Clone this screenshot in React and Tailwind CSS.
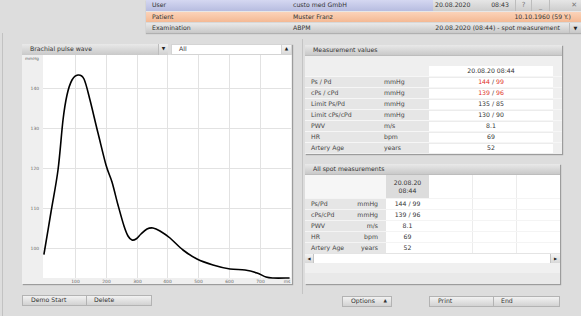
import React from "react"

const FONT = "font-['DejaVu_Sans',sans-serif]"

// pulse wave, absolute page coords, shifted into chart coords below
const WAVE = [
    [44, 254], [51, 212], [58, 170], [63, 120], [67, 95], [72, 80], [78, 75], [84, 79],
    [90, 100], [98, 133], [106, 165], [112, 182], [118, 205], [124, 226], [128, 236],
    [132, 240], [136, 239], [141, 234], [147, 229], [153, 228], [160, 231], [170, 238],
    [183, 250], [197, 259], [213, 265], [230, 269], [245, 270], [257, 273], [266, 277],
    [273, 278], [289, 278],
].map(([x, y]) => [x - 22, y - 55])

function smoothPath(pts) {
    let d = `M${pts[0][0]},${pts[0][1]}`
    for (let i = 0; i < pts.length - 1; i++) {
        const p0 = pts[i - 1] || pts[i]
        const p1 = pts[i]
        const p2 = pts[i + 1]
        const p3 = pts[i + 2] || p2
        const c1 = [p1[0] + (p2[0] - p0[0]) / 6, p1[1] + (p2[1] - p0[1]) / 6]
        const c2 = [p2[0] - (p3[0] - p1[0]) / 6, p2[1] - (p3[1] - p1[1]) / 6]
        d += ` C${c1[0].toFixed(1)},${c1[1].toFixed(1)} ${c2[0].toFixed(1)},${c2[1].toFixed(1)} ${p2[0]},${p2[1]}`
    }
    return d
}

function PulseChart() {
    const vx = [53, 84, 115, 145, 176, 207, 238]
    const hy = [33, 73, 113, 153, 193]
    return (
        <svg width="270" height="229" className="block">
            <rect x="0" y="0" width="270" height="229" fill="#efefef" />
            <rect x="21" y="0" width="248" height="223" fill="#ffffff" />
            {vx.map(x => <line key={x} x1={x + 0.5} y1="0" x2={x + 0.5} y2="223" stroke="#e2e2e2" strokeWidth="1" />)}
            {hy.map(y => <line key={y} x1="21" y1={y + 0.5} x2="269" y2={y + 0.5} stroke="#e2e2e2" strokeWidth="1" />)}
            <text x="3" y="5" fontSize="4.2" fill="#666">mmHg</text>
            {["140", "130", "120", "110", "100"].map((t, i) => (
                <text key={t} x="17" y={hy[i] + 1.5} fontSize="4.4" fill="#666" textAnchor="end">{t}</text>
            ))}
            {["100", "200", "300", "400", "500", "600", "700"].map((t, i) => (
                <text key={t} x={vx[i] + 0.5} y="228" fontSize="4.4" fill="#666" textAnchor="middle">{t}</text>
            ))}
            <text x="265" y="228" fontSize="4.4" fill="#666" textAnchor="middle">ms</text>
            <path d={smoothPath(WAVE)} fill="none" stroke="#000" strokeWidth="1.6" strokeLinejoin="round" strokeLinecap="round" />
        </svg>
    )
}

function Btn({ children, className = "" }) {
    return (
        <div className={`h-[11px] flex items-center bg-gradient-to-b from-[#f2f2f2] to-[#d2d2d2] border border-[#b3b3b3] text-[#333] ${className}`}>
            {children}
        </div>
    )
}

function PanelHeader({ title }) {
    return (
        <div className="h-[11px] flex items-center pl-[8px] bg-gradient-to-b from-[#e9e9e9] to-[#c9c9c9] border-b border-[#bdbdbd] text-[#333]">
            {title}
        </div>
    )
}

const MEAS = [
    ["Ps / Pd", "mmHg", "144", "99", true],
    ["cPs / cPd", "mmHg", "139", "96", true],
    ["Limit Ps/Pd", "mmHg", "135", "85"],
    ["Limit cPs/cPd", "mmHg", "130", "90"],
    ["PWV", "m/s", "8.1"],
    ["HR", "bpm", "69"],
    ["Artery Age", "years", "52"],
]

const SPOT = [
    ["Ps/Pd", "mmHg", "144 / 99"],
    ["cPs/cPd", "mmHg", "139 / 96"],
    ["PWV", "m/s", "8.1"],
    ["HR", "bpm", "69"],
    ["Artery Age", "years", "52"],
]

function MeasurementValues() {
    return (
        <div className="w-[257px] bg-[#efefef] shadow-[1px_1px_1px_#9c9c9c]">
            <PanelHeader title="Measurement values" />
            <div className="h-[10px]" />
            <div className="flex h-[10px]">
                <div className="w-[124px]" />
                <div className="w-[124px] bg-white flex items-center justify-center text-[#333]">20.08.20 08:44</div>
            </div>
            {MEAS.map(([label, unit, a, b, red]) => (
                <div key={label} className="flex h-[11px] border-t border-[#f6f6f6]">
                    <div className="w-[79px] pl-[6px] bg-[#e6e6e6] flex items-center text-[#444]">{label}</div>
                    <div className="w-[45px] bg-[#e6e6e6] flex items-center text-[#444]">{unit}</div>
                    <div className="w-[124px] bg-white border-t border-[#ececec] flex items-center justify-center">
                        {b ? (
                            <span className="text-[#333]">
                                <span className={red ? "text-[#e0312b]" : ""}>{a}</span>
                                {" / "}
                                <span className={red ? "text-[#e0312b]" : ""}>{b}</span>
                            </span>
                        ) : (
                            <span className="text-[#333]">{a}</span>
                        )}
                    </div>
                </div>
            ))}
            <div className="h-[1px]" />
        </div>
    )
}

function SpotMeasurements() {
    return (
        <div className="w-[255px] bg-[#ededed] shadow-[1px_1px_1px_#9c9c9c]">
            <PanelHeader title="All spot measurements" />
            <div className="flex h-[23px]">
                <div className="w-[81px] bg-[#f6f6f6]" />
                <div className="w-[43px] bg-[#dcdcdc] flex flex-col items-center justify-center leading-[8px] text-[#333]">
                    <span>20.08.20</span>
                    <span>08:44</span>
                </div>
                <div className="flex-1 bg-white border-r border-[#ececec]" />
                <div className="w-[44px] bg-white border-r border-[#ececec]" />
                <div className="w-[43px] bg-white" />
            </div>
            {SPOT.map(([label, unit, v]) => (
                <div key={label} className="flex h-[11px] border-t border-[#f4f4f4]">
                    <div className="w-[81px] bg-[#e6e6e6] flex items-center justify-between pl-[6px] pr-[8px] text-[#444]">
                        <span>{label}</span>
                        <span>{unit}</span>
                    </div>
                    <div className="w-[43px] bg-white flex items-center justify-center text-[#333]">{v}</div>
                    <div className="flex-1 bg-white border-r border-[#ececec]" />
                    <div className="w-[44px] bg-white border-r border-[#ececec]" />
                    <div className="w-[43px] bg-white" />
                </div>
            ))}
            <div className="flex h-[10px] bg-white border-t border-[#e4e4e4]">
                <div className="w-[9px] bg-gradient-to-b from-[#f4f4f4] to-[#d8d8d8] border-r border-[#c4c4c4] flex items-center justify-center text-[4px] text-[#222]">◀</div>
                <div className="flex-1" />
                <div className="w-[10px] bg-gradient-to-b from-[#f4f4f4] to-[#d8d8d8] border-l border-[#c4c4c4] flex items-center justify-center text-[4px] text-[#222]">▶</div>
            </div>
            <div className="h-[10px] bg-[#f0f0f0]" />
            <div className="h-[11px] bg-[#e9e9e9]" />
        </div>
    )
}

export default function App() {
    return (
        <div className={`w-[581px] h-[316px] bg-[#dddddd] overflow-hidden text-[6.2px] leading-none ${FONT}`}>
            {/* TOP INFO BAR */}
            <div className="ml-[146px] flex flex-col text-[#333] shadow-[0_1px_1px_#b0b0b0]">
                <div className="h-[11px] flex">
                    <div className="w-[144px] pl-[6px] flex items-center bg-gradient-to-b from-[#d5d8f1] to-[#b7bce0]">User</div>
                    <div className="w-[143px] pl-[3px] flex items-center bg-gradient-to-b from-[#d5d8f1] to-[#b7bce0]">custo med GmbH</div>
                    <div className="flex-1 flex items-center bg-gradient-to-b from-[#e6e6e6] to-[#cdcdcd]">
                        <span className="ml-[2px] w-[48px]">20.08.2020</span>
                        <span className="w-[32px] text-right pr-[6px]">08:43</span>
                        <span className="w-[16px] h-full border-l border-[#bdbdbd] flex items-center justify-center text-[#777] text-[7px]">?</span>
                        <span className="w-[18px] h-full border-l border-[#bdbdbd] flex items-end justify-center pb-[2px] text-[#777]">_</span>
                        <span className="flex-1 h-full border-l border-[#bdbdbd] flex items-center justify-end pr-[4px] text-[#777] text-[7px]">✕</span>
                    </div>
                </div>
                <div className="h-[11px] flex items-center bg-gradient-to-b from-[#fbd3b9] to-[#f4b994] border-t border-[#e7e7e7]">
                    <span className="w-[144px] pl-[6px]">Patient</span>
                    <span className="pl-[3px]">Muster Franz</span>
                    <span className="ml-auto pr-[10px]">10.10.1960 (59 Y.)</span>
                </div>
                <div className="h-[11px] flex items-center bg-gradient-to-b from-[#e9e9e9] to-[#c8c8c8] border-t border-[#d8d8d8]">
                    <span className="w-[144px] pl-[6px]">Examination</span>
                    <span className="pl-[3px]">ABPM</span>
                    <span className="ml-auto pr-[9px]">20.08.2020 (08:44) - spot measurement</span>
                    <span className="w-[12px] h-full border-l border-[#bdbdbd] flex items-center justify-center text-[5px] text-[#222]">▼</span>
                </div>
            </div>

            {/* MAIN */}
            <div className="flex pt-[11px] ml-[2px] border-l border-[#c2c2c2] h-[283px]">
                {/* LEFT: PULSE WAVE */}
                <div className="ml-[19px] w-[270px] flex flex-col">
                    <div className="shadow-[1px_1px_1px_#9c9c9c]">
                        <div className="flex h-[11px]">
                            <div className="w-[136px] flex items-center pl-[8px] bg-gradient-to-b from-[#e9e9e9] to-[#c9c9c9] text-[#333]">Brachial pulse wave</div>
                            <div className="w-[10px] flex items-center justify-center bg-gradient-to-b from-[#f0f0f0] to-[#d0d0d0] border-l border-[#bdbdbd] text-[4.5px] text-[#222]">▼</div>
                            <div className="w-[3px] bg-[#dddddd]" />
                            <div className="flex-1 flex items-center pl-[7px] bg-white text-[#333] border border-[#d4d4d4]">All</div>
                            <div className="w-[10px] flex items-center justify-center bg-gradient-to-b from-[#f6f6f6] to-[#dadada] border border-l-0 border-[#d4d4d4] text-[4.5px] text-[#222]">▲</div>
                        </div>
                        <PulseChart />
                    </div>
                    <div className="flex mt-[11px]">
                        <Btn className="w-[65px] pl-[8px]">Demo Start</Btn>
                        <Btn className="w-[65px] pl-[7px] border-l-0">Delete</Btn>
                    </div>
                </div>

                {/* SPLITTER */}
                <div className="ml-[10px] w-[1px] bg-[#c4c4c4] -mt-[5px] h-[255px]" />

                {/* RIGHT: TABLES */}
                <div className="ml-[2px] w-[257px] pt-[1px] flex flex-col">
                    <MeasurementValues />
                    <div className="mt-[10px]">
                        <SpotMeasurements />
                    </div>
                    <div className="flex mt-[12px]">
                        <Btn className="ml-[37px] w-[50px] pl-[8px] justify-between pr-[4px]">
                            <span>Options</span>
                            <span className="text-[4.5px]">▲</span>
                        </Btn>
                        <Btn className="ml-[37px] w-[65px] pl-[8px]">Print</Btn>
                        <Btn className="w-[66px] pl-[7px] border-l-0">End</Btn>
                    </div>
                </div>
            </div>
        </div>
    )
}
